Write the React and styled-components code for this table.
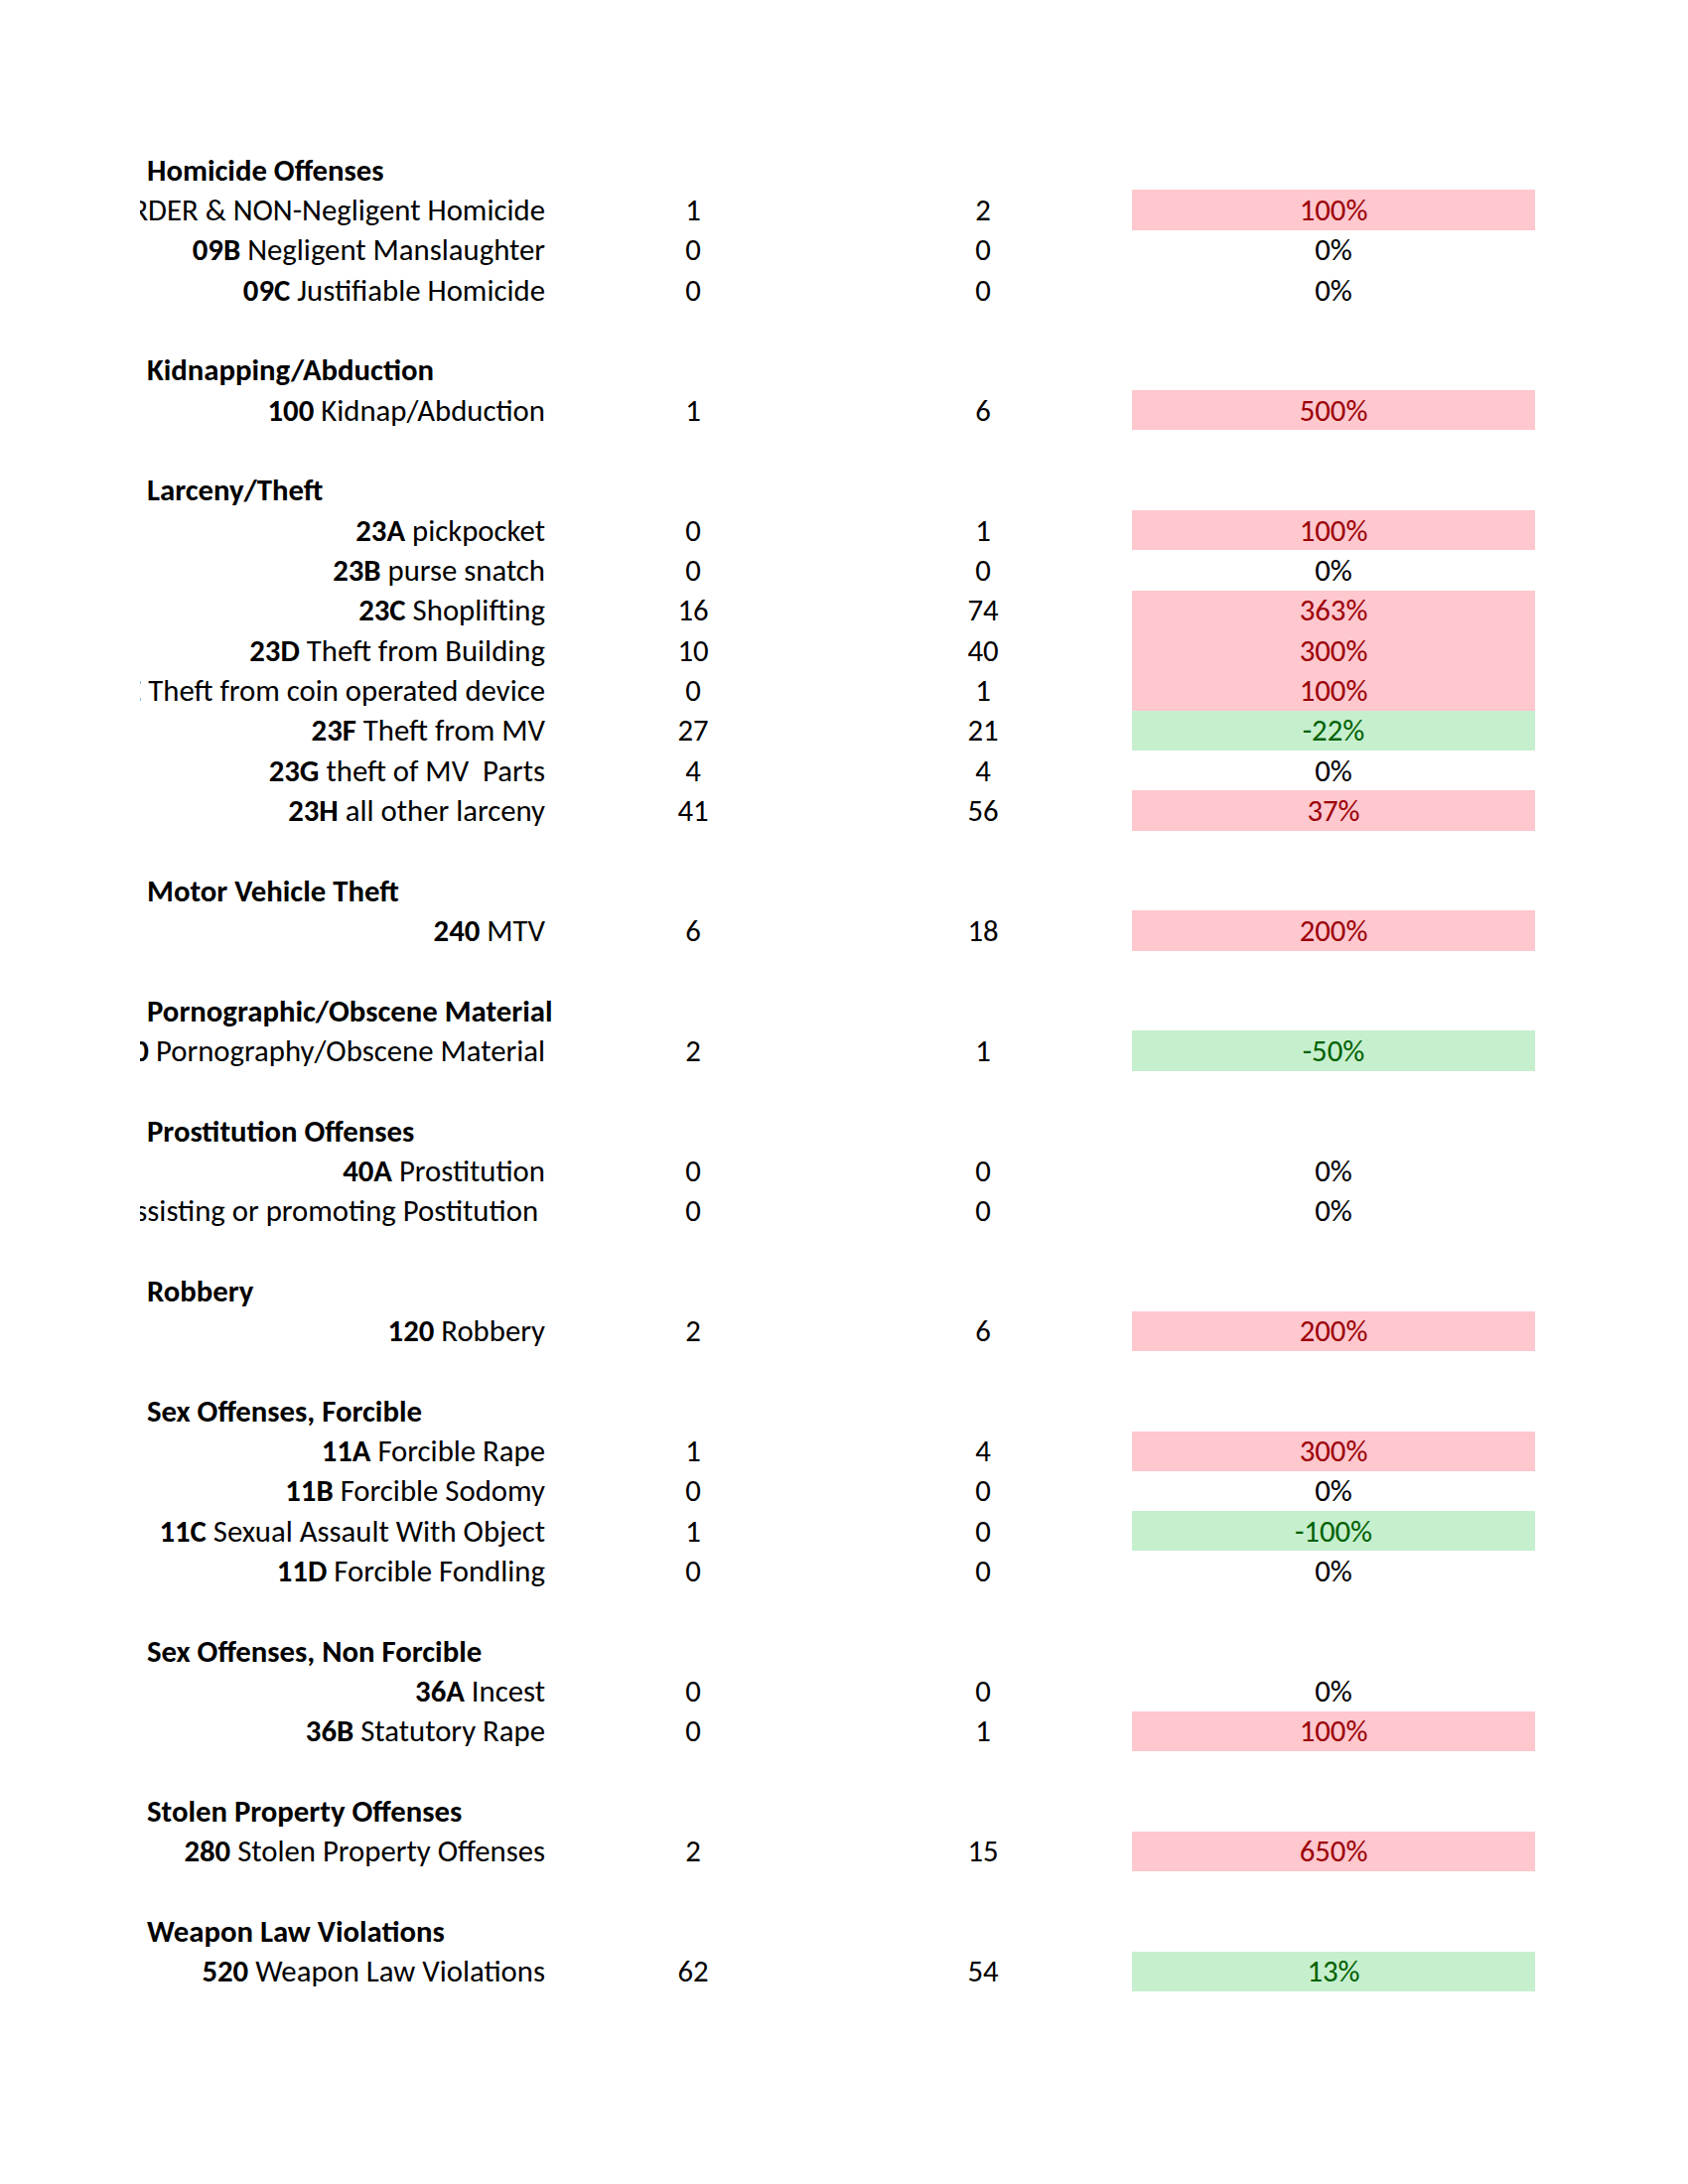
import React from 'react';
import styled, { createGlobalStyle } from 'styled-components';

const GlobalStyle = createGlobalStyle`
	html, body {
		margin: 0;
		background: #ffffff;
	}
	body {
		font-family: "Carlito", "Lato", sans-serif;
		color: #000000;
	}
`;

const sections = [
	{
		title: 'Homicide Offenses',
		rows: [
			['09A', 'MURDER & NON-Negligent Homicide', 1, 2, '100%', 'up'],
			['09B', 'Negligent Manslaughter', 0, 0, '0%'],
			['09C', 'Justifiable Homicide', 0, 0, '0%'],
		],
	},
	{
		title: 'Kidnapping/Abduction',
		rows: [['100', 'Kidnap/Abduction', 1, 6, '500%', 'up']],
	},
	{
		title: 'Larceny/Theft',
		rows: [
			['23A', 'pickpocket', 0, 1, '100%', 'up'],
			['23B', 'purse snatch', 0, 0, '0%'],
			['23C', 'Shoplifting', 16, 74, '363%', 'up'],
			['23D', 'Theft from Building', 10, 40, '300%', 'up'],
			['23E', 'Theft from coin operated device', 0, 1, '100%', 'up'],
			['23F', 'Theft from MV', 27, 21, '-22%', 'down'],
			['23G', 'theft of MV  Parts', 4, 4, '0%'],
			['23H', 'all other larceny', 41, 56, '37%', 'up'],
		],
	},
	{
		title: 'Motor Vehicle Theft',
		rows: [['240', 'MTV', 6, 18, '200%', 'up']],
	},
	{
		title: 'Pornographic/Obscene Material',
		rows: [['370', 'Pornography/Obscene Material', 2, 1, '-50%', 'down']],
	},
	{
		title: 'Prostitution Offenses',
		rows: [
			['40A', 'Prostitution', 0, 0, '0%'],
			['40B', 'Assisting or promoting Postitution ', 0, 0, '0%'],
		],
	},
	{
		title: 'Robbery',
		rows: [['120', 'Robbery', 2, 6, '200%', 'up']],
	},
	{
		title: 'Sex Offenses, Forcible',
		rows: [
			['11A', 'Forcible Rape', 1, 4, '300%', 'up'],
			['11B', 'Forcible Sodomy', 0, 0, '0%'],
			['11C', 'Sexual Assault With Object', 1, 0, '-100%', 'down'],
			['11D', 'Forcible Fondling', 0, 0, '0%'],
		],
	},
	{
		title: 'Sex Offenses, Non Forcible',
		rows: [
			['36A', 'Incest', 0, 0, '0%'],
			['36B', 'Statutory Rape', 0, 1, '100%', 'up'],
		],
	},
	{
		title: 'Stolen Property Offenses',
		rows: [['280', 'Stolen Property Offenses', 2, 15, '650%', 'up']],
	},
	{
		title: 'Weapon Law Violations',
		rows: [['520', 'Weapon Law Violations', 62, 54, '13%', 'down']],
	},
];

export default function App() {
	return (
		<>
			<GlobalStyle />
			<Sheet>
				{sections.map((section, i) => (
					<Section key={section.title} $last={i === sections.length - 1}>
						<Row>
							<Heading>{section.title}</Heading>
						</Row>
						{section.rows.map(([code, name, before, after, change, tone]) => (
							<Row key={code}>
								<Label>
									<span>
										<b>{code}</b> {name}
									</span>
								</Label>
								<Count>{before}</Count>
								<Count>{after}</Count>
								<Change $tone={tone}>{change}</Change>
							</Row>
						))}
					</Section>
				))}
			</Sheet>
		</>
	);
}

// column widths of the sheet: label, last year, this year, change
const COLUMNS = '415px 284px 300px 406px';
const ROW_HEIGHT = '40.34px';

const Sheet = styled.div`
	padding: 151px 0 0 141px;
	font-size: 30.75px;
`;

const Section = styled.div`
	margin-bottom: ${(p) => (p.$last ? '0' : ROW_HEIGHT)};
`;

const Row = styled.div`
	display: grid;
	grid-template-columns: ${COLUMNS};
	height: ${ROW_HEIGHT};
	align-items: stretch;
`;

const Heading = styled.div`
	display: flex;
	align-items: center;
	padding-left: 7px;
	font-weight: bold;
	white-space: nowrap;
`;

// right aligned, long labels spill out to the left and get cut at the sheet edge
const Label = styled.div`
	display: flex;
	align-items: center;
	justify-content: flex-end;
	padding-right: 7px;
	overflow: hidden;
	white-space: pre;
	span {
		flex-shrink: 0;
	}
`;

const Count = styled.div`
	display: flex;
	align-items: center;
	justify-content: center;
`;

const toneColors = {
	up: { bg: '#ffc7ce', fg: '#9c0006' },
	down: { bg: '#c6efce', fg: '#006100' },
};

const Change = styled.div`
	display: flex;
	align-items: center;
	justify-content: center;
	background: ${(p) => (toneColors[p.$tone] ? toneColors[p.$tone].bg : 'transparent')};
	color: ${(p) => (toneColors[p.$tone] ? toneColors[p.$tone].fg : '#000000')};
`;
